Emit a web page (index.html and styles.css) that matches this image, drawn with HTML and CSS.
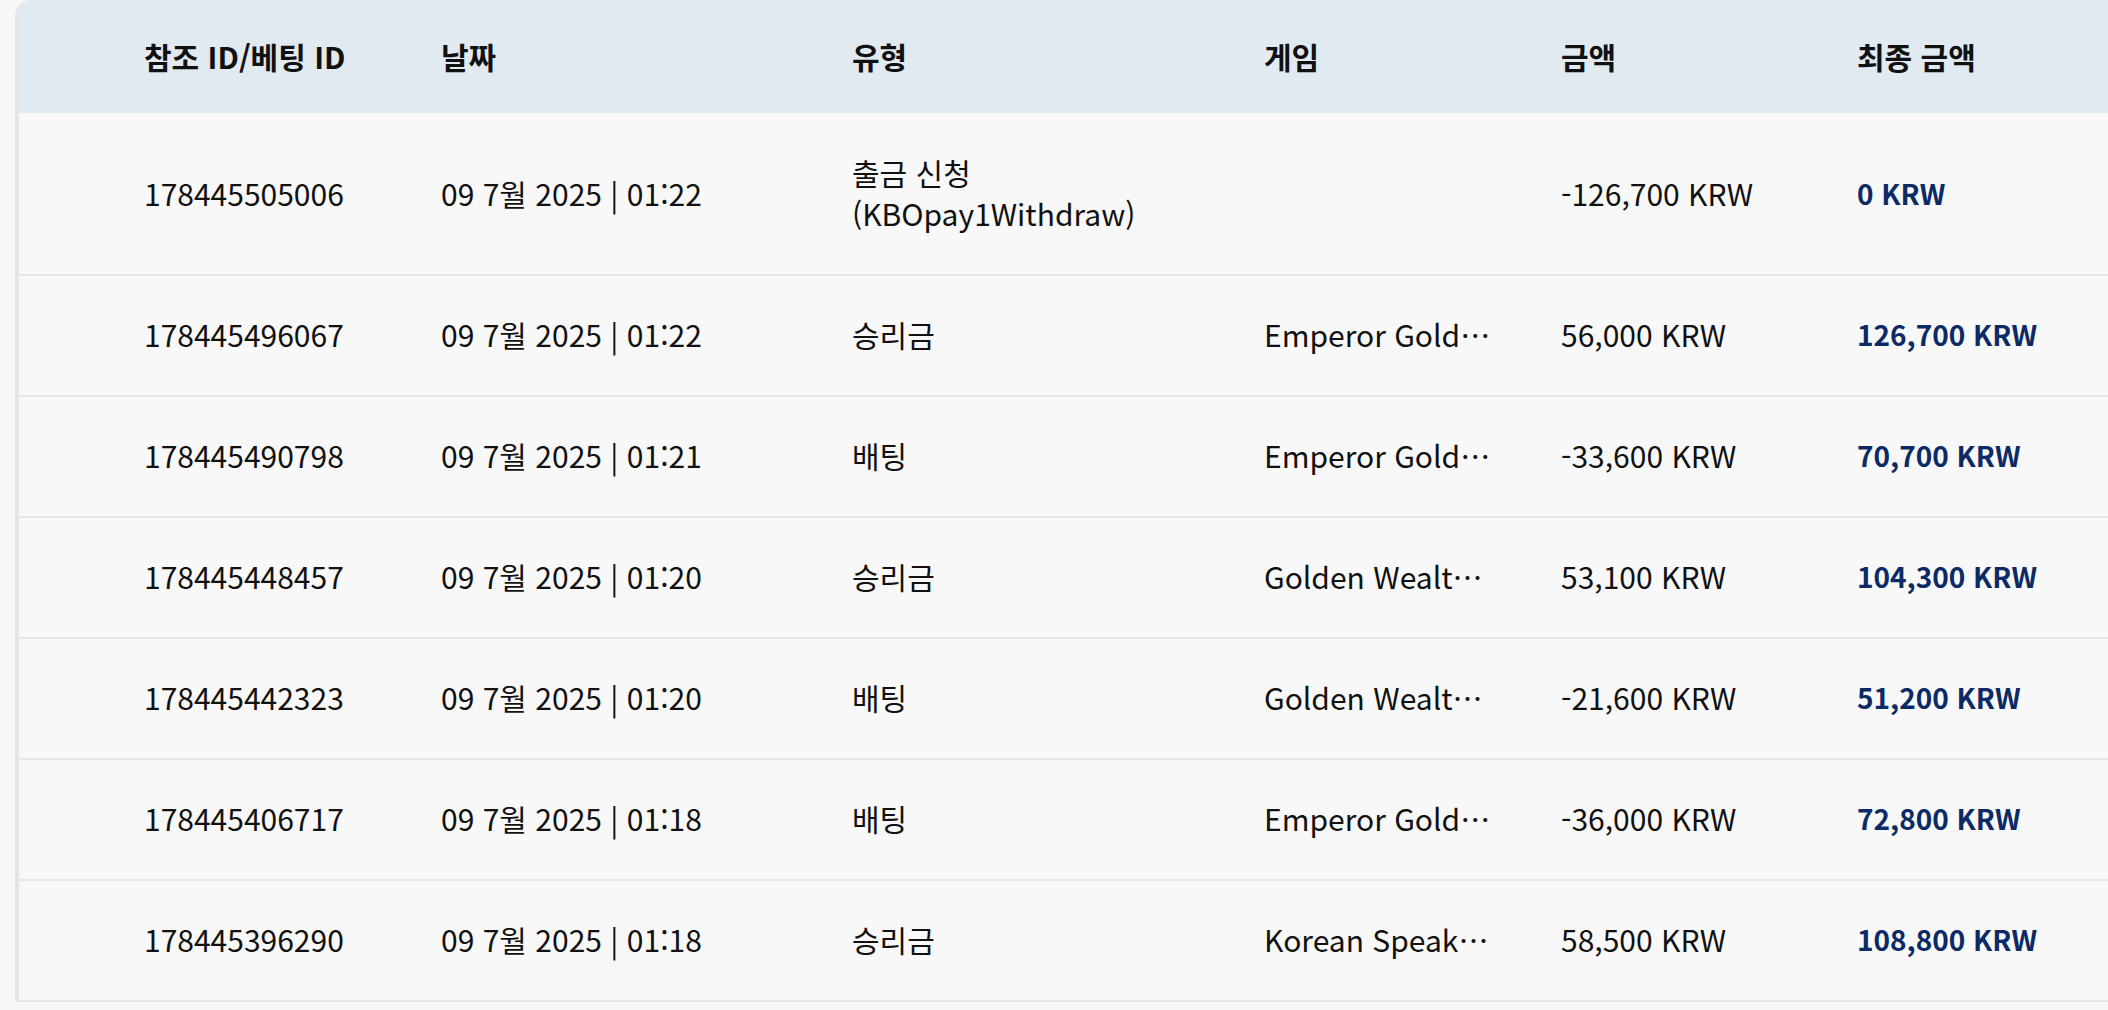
FILE: index.html
```html
<!DOCTYPE html>
<html lang="ko">
<head>
    <meta charset="UTF-8">
    <meta name="viewport" content="width=device-width, initial-scale=1.0">
    <title>거래 내역</title>
    <link rel="stylesheet" href="styles.css">
</head>
<body>

    <div class="history">
        <div class="row head">
            <div class="cell">참조 ID/베팅 ID</div>
            <div class="cell">날짜</div>
            <div class="cell">유형</div>
            <div class="cell">게임</div>
            <div class="cell">금액</div>
            <div class="cell">최종 금액</div>
        </div>

        <div class="row">
            <div class="cell">178445505006</div>
            <div class="cell">09 7월 2025 | 01:22</div>
            <div class="cell">출금 신청<br>(KBOpay1Withdraw)</div>
            <div class="cell game"></div>
            <div class="cell">-126,700 KRW</div>
            <div class="cell total">0 KRW</div>
        </div>

        <div class="row">
            <div class="cell">178445496067</div>
            <div class="cell">09 7월 2025 | 01:22</div>
            <div class="cell">승리금</div>
            <div class="cell game">Emperor Gold Dragon</div>
            <div class="cell">56,000 KRW</div>
            <div class="cell total">126,700 KRW</div>
        </div>

        <div class="row">
            <div class="cell">178445490798</div>
            <div class="cell">09 7월 2025 | 01:21</div>
            <div class="cell">배팅</div>
            <div class="cell game">Emperor Gold Dragon</div>
            <div class="cell">-33,600 KRW</div>
            <div class="cell total">70,700 KRW</div>
        </div>

        <div class="row">
            <div class="cell">178445448457</div>
            <div class="cell">09 7월 2025 | 01:20</div>
            <div class="cell">승리금</div>
            <div class="cell game">Golden Wealth Baccarat</div>
            <div class="cell">53,100 KRW</div>
            <div class="cell total">104,300 KRW</div>
        </div>

        <div class="row">
            <div class="cell">178445442323</div>
            <div class="cell">09 7월 2025 | 01:20</div>
            <div class="cell">배팅</div>
            <div class="cell game">Golden Wealth Baccarat</div>
            <div class="cell">-21,600 KRW</div>
            <div class="cell total">51,200 KRW</div>
        </div>

        <div class="row">
            <div class="cell">178445406717</div>
            <div class="cell">09 7월 2025 | 01:18</div>
            <div class="cell">배팅</div>
            <div class="cell game">Emperor Gold Dragon</div>
            <div class="cell">-36,000 KRW</div>
            <div class="cell total">72,800 KRW</div>
        </div>

        <div class="row">
            <div class="cell">178445396290</div>
            <div class="cell">09 7월 2025 | 01:18</div>
            <div class="cell">승리금</div>
            <div class="cell game">Korean Speaking Baccarat</div>
            <div class="cell">58,500 KRW</div>
            <div class="cell total">108,800 KRW</div>
        </div>
    </div>

</body>
</html>
```

FILE: styles.css
```css
/* General Styling */
body {
    font-family: "Noto Sans CJK KR", "Noto Sans", sans-serif;
    margin: 0;
    padding: 0;
    background-color: #f7f7f8;
    color: #111;
    overflow: hidden;
}

/* Table card */
.history {
    margin-left: 15px;
    background: #f8f8f8;
    border-left: 4px solid #e3e5ea;
    border-top: 1px solid #e3e8ee;
    border-top-left-radius: 16px;
    overflow: hidden;
}

.row {
    display: grid;
    grid-template-columns: 297px 411px 412px 297px 296px 1fr;
    align-items: center;
    padding: 38.75px 0 38.75px 125px;
    border-bottom: 2px solid #e4e6ea;
    font-size: 30px;
    line-height: 41.5px;
}

.row.head {
    background-color: #e1e9f1;
    font-weight: 700;
    padding-top: 35.25px;
    padding-bottom: 35.25px;
    border-bottom: none;
}

.cell {
    white-space: nowrap;
}

.game {
    overflow: hidden;
    text-overflow: ellipsis;
    padding-right: 70px;
}

.total {
    color: #0b2a66;
    font-size: 28px;
    font-weight: 700;
}
```
